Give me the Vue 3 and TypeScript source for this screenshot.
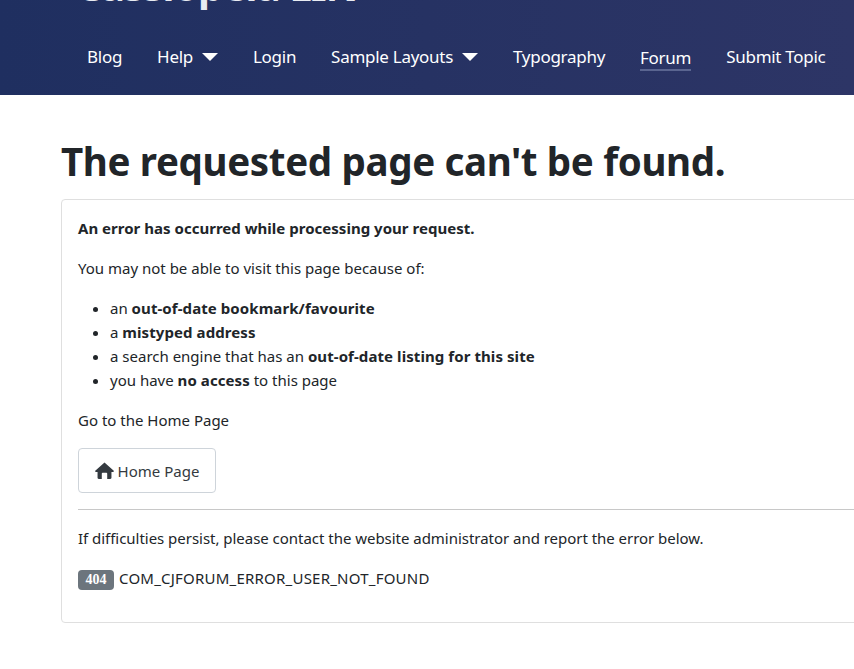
<script setup lang="ts">
const navItems = [
  { label: 'Blog' },
  { label: 'Help', caret: true },
  { label: 'Login' },
  { label: 'Sample Layouts', caret: true },
  { label: 'Typography' },
  { label: 'Forum', active: true },
  { label: 'Submit Topic' },
]
</script>

<template>
  <div class="page">
    <header class="header">
      <div class="brand">Cassiopeia LIN</div>
      <nav class="nav">
        <a v-for="item in navItems" :key="item.label" class="nav-link">
          <span :class="{ active: item.active }">{{ item.label }}</span>
          <i v-if="item.caret" class="caret"></i>
        </a>
      </nav>
    </header>
    <main class="main">
      <h1 class="title">The requested page can't be found.</h1>
      <section class="card">
        <p class="lead"><strong>An error has occurred while processing your request.</strong></p>
        <p>You may not be able to visit this page because of:</p>
        <ul>
          <li>an <strong>out-of-date bookmark/favourite</strong></li>
          <li>a <strong>mistyped address</strong></li>
          <li>a search engine that has an <strong>out-of-date listing for this site</strong></li>
          <li>you have <strong>no access</strong> to this page</li>
        </ul>
        <p>Go to the Home Page</p>
        <a class="btn">
          <svg class="home" viewBox="0 0 24 22" aria-hidden="true"><path fill="currentColor" d="M12 0.600 L24 11.400 C24.300 12 24 13 23 13 L21 13 L21 20.500 C21 21.400 20.400 22 19.500 22 L15.500 22 L15.500 15 C15.500 14.400 15.100 14 14.500 14 L9.500 14 C8.900 14 8.500 14.400 8.500 15 L8.500 22 L4.500 22 C3.600 22 3 21.400 3 20.500 L3 13 L1 13 C0 13 -0.300 12 0 11.400 Z"/></svg>
          Home Page
        </a>
        <hr />
        <p class="help">If difficulties persist, please contact the website administrator and report the error below.</p>
        <p class="last"><span class="badge">404</span><span class="code">COM_CJFORUM_ERROR_USER_NOT_FOUND</span></p>
      </section>
    </main>
  </div>
</template>

<style>
html, body { margin: 0; background: #fff; overflow: hidden; }
</style>

<style scoped>
.page {
  width: 854px;
  height: 669px;
  overflow: hidden;
  font-family: "Noto Sans", "Open Sans", sans-serif;
  font-size: 15px;
  line-height: 24px;
  color: #212529;
}
.header {
  height: 95px;
  box-sizing: border-box;
  background: linear-gradient(90deg, #1f2f60, #2d3566);
  color: #fff;
  overflow: hidden;
  padding-left: 76px;
}
.brand {
  font-size: 40px;
  line-height: 40px;
  font-weight: 700;
  margin-top: -34px;
  height: 40px;
  color: #e8ebf2;
  white-space: nowrap;
  letter-spacing: -0.8px;
}
.nav {
  display: flex;
  gap: 35px;
  margin-top: 37px;
  padding-left: 11px;
  font-size: 17px;
  line-height: 28px;
  white-space: nowrap;
}
.nav-link { display: flex; align-items: center; gap: 9px; letter-spacing: -0.28px; }
.active { box-shadow: 0 2px 0 #5a6590; line-height: 23px; display: block; }
.caret {
  width: 0;
  height: 0;
  border-left: 8px solid transparent;
  border-right: 8px solid transparent;
  border-top: 8px solid #fff;
}
.main { padding: 42px 0 0 61px; }
.title {
  margin: 0 0 14px;
  font-size: 38.5px;
  line-height: 48px;
  font-weight: 700;
  letter-spacing: -0.35px;
  white-space: nowrap;
}
.card {
  width: 800px;
  height: 424px;
  box-sizing: border-box;
  border: 1px solid #dfdfdf;
  border-radius: 4px;
  padding: 16px;
  white-space: nowrap;
}
p { margin: 0 0 16px; }
ul { margin: 0 0 16px; padding-left: 32px; }
strong { font-weight: 700; letter-spacing: 0.08px; }
.lead strong { letter-spacing: 0.02px; }
.help { letter-spacing: -0.03px; }
.btn {
  display: inline-flex;
  align-items: center;
  gap: 4px;
  height: 45px;
  width: 138px;
  box-sizing: border-box;
  justify-content: center;
  border: 1px solid #ced4da;
  border-radius: 4px;
  color: #343a40;
  vertical-align: top;
}
.home { width: 19px; height: 17px; }
hr { border: 0; border-top: 1px solid #c8c8c8; margin: 16px 0; width: 792px; }
.badge {
  display: inline-block;
  background: #6c757d;
  color: #fff;
  font-family: "Liberation Serif", serif;
  font-size: 14px;
  line-height: 14px;
  font-weight: 700;
  padding: 3px 7px;
  width: 22px;
  text-align: center;
  border-radius: 4px;
  margin-right: 5px;
}
.code { letter-spacing: 0.22px; }
.last { margin: 0; }
</style>
